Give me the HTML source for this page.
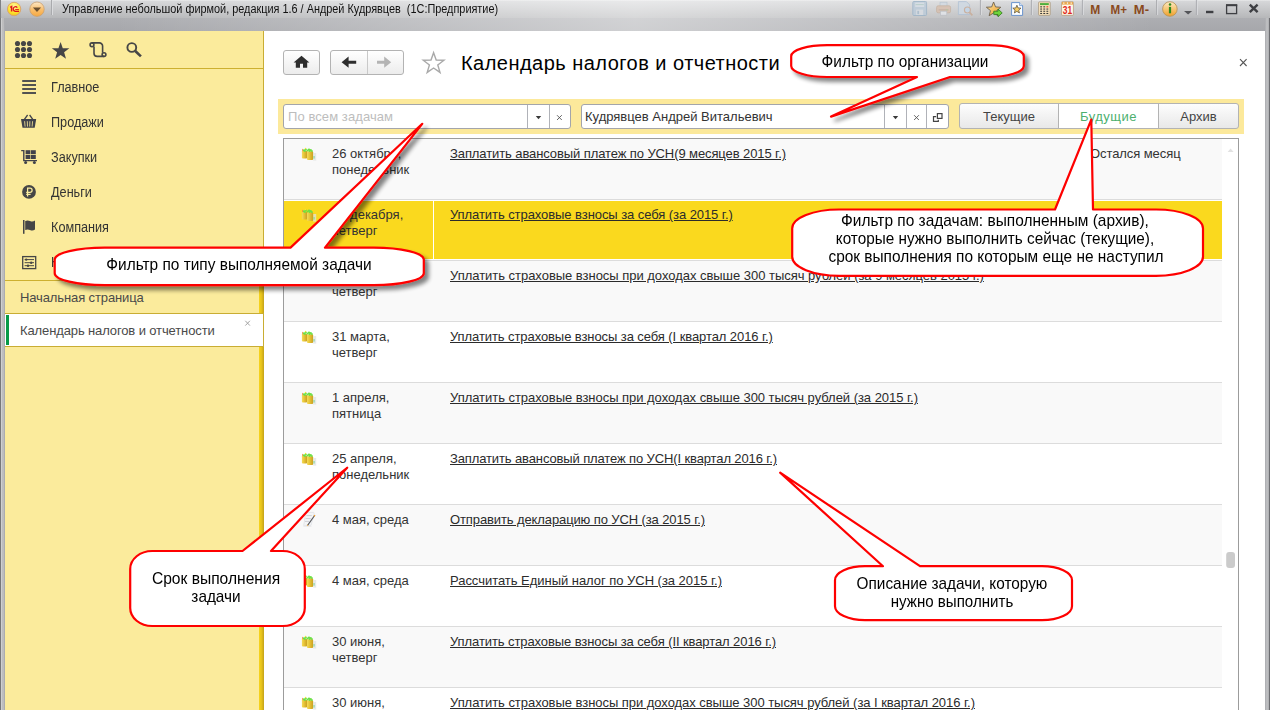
<!DOCTYPE html>
<html lang="ru">
<head>
<meta charset="utf-8">
<title>Календарь налогов и отчетности</title>
<style>
*{box-sizing:border-box;margin:0;padding:0}
html,body{width:1270px;height:710px;overflow:hidden;background:#fff}
body{position:relative;font-family:"Liberation Sans",sans-serif;color:#333;font-size:13px}
.abs{position:absolute}
.t{position:absolute;white-space:nowrap;line-height:1}
/* window chrome */
#tb1{left:0;top:0;width:1270px;height:18px;background:linear-gradient(#e9eaeb 0,#d5d6d8 1.5px,#b6b7b9 18px)}
#tb2{left:0;top:18px;width:1270px;height:13px;background:linear-gradient(#adaeb2,#a6a7ab)}
#tbo{left:0;top:0;width:1270px;height:31px;background:linear-gradient(90deg,rgba(255,255,255,0) 0,rgba(255,255,255,0) 9%,rgba(255,255,255,.46) 50%,rgba(255,255,255,0) 91%,rgba(255,255,255,0) 100%)}
#lb{left:0;top:18px;width:5px;height:692px;background:linear-gradient(90deg,#77787a 0,#77787a 1px,#cfcfd0 1px,#cfcfd0 2px,#bebebf 2px,#bcbcbe 4px,#abacb0 4px,#abacb0 5px)}
#lb0{left:0;top:0;width:1px;height:18px;background:#808185}
#rb{left:1265px;top:18px;width:5px;height:692px;background:linear-gradient(90deg,#a9aaae 0,#c2c3c5 2px,#acadb0 4px,#6c6d71 4px,#6c6d71 5px)}
.sep{position:absolute;top:1px;width:1px;height:16px;background:#b0b1b4;box-shadow:1px 0 0 #e6e7e9}
/* sidebar */
#side{left:5px;top:31px;width:259px;height:679px;background:#fbeb9c}
#sideedge{left:259px;top:281px;width:5px;height:429px;background:linear-gradient(90deg,#f7d41c,#e6c21c 50%,#c3a21a)}
.gl{position:absolute;left:5px;width:254px;height:1px;background:#cdb030}
.mi{position:absolute;left:50.5px;font-size:14px;line-height:16px;color:#333;white-space:nowrap;transform:scaleX(.905);transform-origin:0 50%}
.tab{position:absolute;left:20px;font-size:13px;line-height:16px;color:#4a4a4a;white-space:nowrap;letter-spacing:-.12px}
/* content */
.btn{position:absolute;top:50px;height:25px;border:1px solid #b3b3b3;border-radius:3px;background:linear-gradient(#ffffff,#ececec)}
#fbar{left:278px;top:99px;width:966px;height:35px;background:#fce99b}
.inp{position:absolute;top:104px;height:25px;border:1px solid #a3a5ab;border-radius:3px;background:#fff}
.vd{position:absolute;top:0;width:1px;height:23px;background:#b0b2b8}
.seg{position:absolute;top:103px;height:26px;border:1px solid #b3b3b3;background:linear-gradient(#fdfdfd,#e8e8e8);font-size:13px;line-height:25px;text-align:center;color:#444}
/* table */
#tbl{left:283px;top:138px;width:956px;height:580px;border:1px solid #9c9c9c;background:#fff}
.row{position:absolute;left:284px;width:938px;height:60px}
.odd{background:#f9f9f9}
.rl{position:absolute;left:284px;width:938px;height:1px;background:#dcdcdc}
.d{position:absolute;left:332px;font-size:13px;line-height:16px;color:#333;white-space:nowrap}
.k{position:absolute;left:450px;font-size:13px;line-height:16px;color:#2b2b2b;white-space:nowrap;text-decoration:underline;letter-spacing:-.07px}
/* callouts */
.ct{position:absolute;font-size:17px;line-height:18px;color:#000;text-align:center;white-space:nowrap;transform:scaleX(.906);transform-origin:50% 50%}
</style>
</head>
<body>
<!-- ===== window chrome ===== -->
<div class="abs" id="tb1"></div>
<div class="abs" id="tb2"></div>
<div class="abs" id="tbo"></div>
<div class="abs" id="lb"></div><div class="abs" id="lb0"></div>
<div class="abs" id="rb"></div>
<div class="t" id="wtitle" style="left:62px;top:2px;font-size:12px;line-height:14px;color:#111;transform:scaleX(.907);transform-origin:0 50%">Управление небольшой фирмой, редакция 1.6 / Андрей Кудрявцев&nbsp; (1С:Предприятие)</div>

<!--TB-->
<svg class="abs" style="left:0;top:0" width="1270" height="32" viewBox="0 0 1270 32">
<defs>
<radialGradient id="g1c" cx=".5" cy=".3" r=".8"><stop offset="0" stop-color="#fff7a0"/><stop offset=".6" stop-color="#fde22a"/><stop offset="1" stop-color="#e9b820"/></radialGradient>
<linearGradient id="gor" x1="0" y1="0" x2="0" y2="1"><stop offset="0" stop-color="#fde8c8"/><stop offset=".5" stop-color="#f9c070"/><stop offset="1" stop-color="#f6a840"/></linearGradient>
<linearGradient id="gst" x1="0" y1="0" x2="1" y2="1"><stop offset="0" stop-color="#fde6a8"/><stop offset="1" stop-color="#ee9c22"/></linearGradient>
<linearGradient id="gin" x1="0" y1="0" x2="0" y2="1"><stop offset="0" stop-color="#fdebc4"/><stop offset="1" stop-color="#f0a028"/></linearGradient>
</defs>
<circle cx="14.1" cy="9" r="6.7" fill="url(#g1c)" stroke="#d9a070" stroke-width=".9"/>
<path d="M10.2,7.4 l1.4,-.9 v5" fill="none" stroke="#e0151b" stroke-width="1.5"/><path d="M17.3,7.6 a2.3,2.3 0 1 0 -1.4,3.7 h3.1" fill="none" stroke="#e0151b" stroke-width="1.3"/><path d="M15.2,9.6 h3.7" stroke="#e0151b" stroke-width="1"/>
<circle cx="37" cy="9.2" r="7.2" fill="url(#gor)" stroke="#c9a070" stroke-width=".8"/><path d="M32.9,7.4 h8.2 l-4.1,4.6 Z" fill="#6b5030"/>
<rect x="51.0" y="0" width="1" height="15" fill="#a9aaad"/><rect x="52.0" y="0" width="1" height="15" fill="#dfe0e2" opacity=".8"/>
<rect x="979.9" y="0" width="1" height="15" fill="#a9aaad"/><rect x="980.9" y="0" width="1" height="15" fill="#dfe0e2" opacity=".8"/>
<rect x="1030.9" y="0" width="1" height="15" fill="#a9aaad"/><rect x="1031.9" y="0" width="1" height="15" fill="#dfe0e2" opacity=".8"/>
<rect x="1081.9" y="0" width="1" height="15" fill="#a9aaad"/><rect x="1082.9" y="0" width="1" height="15" fill="#dfe0e2" opacity=".8"/>
<rect x="1156.1" y="0" width="1" height="15" fill="#a9aaad"/><rect x="1157.1" y="0" width="1" height="15" fill="#dfe0e2" opacity=".8"/>
<rect x="1195.9" y="0" width="1" height="15" fill="#a9aaad"/><rect x="1196.9" y="0" width="1" height="15" fill="#dfe0e2" opacity=".8"/>
<g opacity=".85">
<rect x="912.8" y="1.5" width="13.8" height="14" rx="1" fill="#bccbd9" stroke="#9db4c8" stroke-width="1"/><rect x="915.2" y="2.6" width="9" height="4.4" fill="#d6dee6"/><path d="M915.6,4.6 h8.2" stroke="#a9c6c0" stroke-width=".8"/><rect x="916.2" y="9.6" width="7" height="5.4" fill="#d8dde3"/><rect x="917.3" y="10.8" width="1.8" height="3.4" fill="#a9bccd"/>
<rect x="940" y="2.2" width="7" height="5" fill="#d3dbe3" stroke="#b3c0cc" stroke-width=".7"/><rect x="936.6" y="5.8" width="14" height="7" rx="1.6" fill="#d8c1b0" stroke="#c4ad9c" stroke-width=".8"/><rect x="938.6" y="9.4" width="10" height="1" fill="#bfa898"/><rect x="940.4" y="11.2" width="6.4" height="4" fill="#e3e6ea" stroke="#b9bcc2" stroke-width=".7"/><rect x="946.4" y="9.4" width="1.2" height="1" fill="#9fd49a"/>
<path d="M958.4,1.6 h8 l3.2,3.2 v9.8 h-11.2 Z" fill="#cfd9e3" stroke="#a9bdd2" stroke-width=".8"/><circle cx="967.4" cy="10" r="3" fill="#c4d7ea" stroke="#c9ac98" stroke-width="1.1"/><path d="M969.6,12.4 l2.8,3" stroke="#c9ac98" stroke-width="1.6"/>
</g>
<polygon points="993.60,2.00 995.54,6.93 1000.83,7.25 996.74,10.62 998.07,15.75 993.60,12.90 989.13,15.75 990.46,10.62 986.37,7.25 991.66,6.93" fill="url(#gst)" stroke="#6e6350" stroke-width=".9"/>
<path d="M993.8,11.2 h4.2 v-2.2 l4.2,3.9 l-4.2,3.9 v-2.2 h-4.2 Z" fill="#6fd43a" stroke="#2f7a1c" stroke-width=".8"/>
<path d="M1011.6,2.6 h8 l3,3 v9.8 h-11 Z" fill="#fdfeff" stroke="#5b8acb" stroke-width=".9"/><path d="M1019.6,2.6 v3 h3" fill="#dbe7f5" stroke="#5b8acb" stroke-width=".7"/>
<polygon points="1016.90,5.20 1018.02,7.96 1020.99,8.17 1018.71,10.09 1019.43,12.98 1016.90,11.40 1014.37,12.98 1015.09,10.09 1012.81,8.17 1015.78,7.96" fill="#f6cd62" stroke="#5e5544" stroke-width=".8"/>
<rect x="1038.6" y="1.9" width="11.6" height="13.4" rx=".8" fill="#fbe5bd" stroke="#a7977f" stroke-width=".8"/><rect x="1040" y="3.1" width="8.8" height="2" fill="#4caf3c"/>
<rect x="1040.2" y="6.3" width="1.9" height="1.1" fill="#3a3a3a"/>
<rect x="1043.3" y="6.3" width="1.9" height="1.1" fill="#3a3a3a"/>
<rect x="1046.4" y="6.3" width="1.9" height="1.1" fill="#e03020"/>
<rect x="1040.2" y="8.5" width="1.9" height="1.1" fill="#3a3a3a"/>
<rect x="1043.3" y="8.5" width="1.9" height="1.1" fill="#3a3a3a"/>
<rect x="1046.4" y="8.5" width="1.9" height="1.1" fill="#3a3a3a"/>
<rect x="1040.2" y="10.7" width="1.9" height="1.1" fill="#3a3a3a"/>
<rect x="1043.3" y="10.7" width="1.9" height="1.1" fill="#3a3a3a"/>
<rect x="1046.4" y="10.7" width="1.9" height="1.1" fill="#3a3a3a"/>
<rect x="1040.2" y="12.9" width="1.9" height="1.1" fill="#3a3a3a"/>
<rect x="1043.3" y="12.9" width="1.9" height="1.1" fill="#3a3a3a"/>
<rect x="1046.4" y="12.9" width="1.9" height="1.1" fill="#3a3a3a"/>
<rect x="1061.6" y="1.7" width="11.8" height="13.6" rx=".8" fill="#fff8ea" stroke="#b59a78" stroke-width=".8"/><rect x="1062" y="2" width="11" height="2.6" fill="#e9a84e"/>
<rect x="1063.2" y="2.5" width="1.2" height="1.2" fill="#fff"/>
<rect x="1066.9" y="2.5" width="1.2" height="1.2" fill="#fff"/>
<rect x="1070.6000000000001" y="2.5" width="1.2" height="1.2" fill="#fff"/>
<text x="1067.5" y="13.6" font-family="Liberation Sans" font-weight="bold" font-size="10" fill="#e02a1a" text-anchor="middle" textLength="9.4" lengthAdjust="spacingAndGlyphs">31</text>
<g font-family="Liberation Sans" font-weight="bold" font-size="13.4" fill="#8a4a1c"><text x="1090.3" y="14" textLength="10" lengthAdjust="spacingAndGlyphs">M</text><text x="1110.6" y="14" textLength="16.4" lengthAdjust="spacingAndGlyphs">M+</text><text x="1133.8" y="14" textLength="15.2" lengthAdjust="spacingAndGlyphs">M-</text></g>
<circle cx="1169.9" cy="9" r="7.3" fill="url(#gin)" stroke="#b8965c" stroke-width=".9"/><rect x="1168.9" y="6.9" width="2.2" height="6.4" fill="#2e8a1e"/><circle cx="1170" cy="4.6" r="1.25" fill="#2e8a1e"/>
<path d="M1184,11 h8.2 l-4.1,3.6 Z" fill="#55565a"/>
<rect x="1206" y="10.8" width="7.4" height="2.4" fill="#3e3f43"/>
<rect x="1226.6" y="5.2" width="10" height="8.4" fill="none" stroke="#3e3f43" stroke-width="1.3"/><rect x="1226" y="4.2" width="11.2" height="2" fill="#3e3f43"/>
<path d="M1249.8,4.6 l7.8,7.6 M1257.6,4.6 l-7.8,7.6" stroke="#3e3f43" stroke-width="2.4"/>
</svg>
<!--/TB-->
<!-- ===== sidebar ===== -->
<div class="abs" id="side"></div>
<div class="abs" id="sideedge"></div>
<div class="abs" style="left:263px;top:31px;width:1px;height:250px;background:#c9ad33"></div>
<div class="gl" style="top:68px;width:258px"></div>
<div class="mi" style="top:79px">Главное</div>
<div class="mi" style="top:114px">Продажи</div>
<div class="mi" style="top:149px">Закупки</div>
<div class="mi" style="top:184px">Деньги</div>
<div class="mi" style="top:219px">Компания</div>
<div class="mi" style="top:254px">Настройки</div>
<div class="gl" style="top:280px"></div>
<div class="tab" style="top:290px">Начальная страница</div>
<div class="abs" style="left:5px;top:313px;width:259px;height:34px;background:#fff;border:1px solid #c9ad33;border-left:none"></div>
<div class="abs" style="left:6px;top:315px;width:3px;height:30px;background:#079a47"></div>
<div class="tab" style="top:323px">Календарь налогов и отчетности</div>

<!-- ===== content header ===== -->
<div class="btn" style="left:283px;width:37px"></div>
<div class="btn" style="left:330px;width:74px"></div>
<div class="abs" style="left:367px;top:51px;width:1px;height:23px;background:#c9c9c9"></div>
<div class="t" id="ptitle" style="left:461px;top:52px;font-size:20px;line-height:22px;color:#000;letter-spacing:.47px">Календарь налогов и отчетности</div>

<!-- ===== filter bar ===== -->
<div class="abs" id="fbar"></div>
<div class="inp" style="left:283px;width:288px"><div class="vd" style="left:243px"></div><div class="vd" style="left:265px"></div></div>
<div class="t" style="left:288px;top:109px;font-size:13px;line-height:15px;color:#bdbdbd;letter-spacing:.08px">По всем задачам</div>
<div class="inp" style="left:581px;width:368px"><div class="vd" style="left:302px"></div><div class="vd" style="left:324px"></div><div class="vd" style="left:344px"></div></div>
<div class="t" id="org" style="left:585px;top:109px;font-size:13px;line-height:16px;color:#333">Кудрявцев Андрей Витальевич</div>
<div class="seg" style="left:959px;width:100px;border-radius:3px 0 0 3px">Текущие</div>
<div class="seg" style="left:1058px;width:101px;background:#fff;color:#4caf6e;letter-spacing:.5px">Будущие</div>
<div class="seg" style="left:1158px;width:81px;border-radius:0 3px 3px 0">Архив</div>

<!-- ===== table ===== -->
<div class="abs" id="tbl"></div>




<!--ICONS-->
<svg class="abs" style="left:0;top:0" width="1270" height="710" viewBox="0 0 1270 710">
<defs>
<linearGradient id="gold" x1="0" x2="1"><stop offset="0" stop-color="#f4dc58"/><stop offset=".45" stop-color="#e6c236"/><stop offset="1" stop-color="#c9a022"/></linearGradient>
<g id="coin"><rect x="13.2" y="6" width="3" height="7.6" fill="#dfe3e3" opacity=".75"/><rect x="13.3" y="9" width="1.5" height="2.6" fill="#7fd79a" opacity=".7"/>
<rect x="1.9" y="3.7" width="5.2" height="7.8" rx=".9" fill="url(#gold)"/><rect x="7" y="4.3" width="6.1" height="8.6" rx=".9" fill="url(#gold)"/>
<g fill="#6be045"><circle cx="4" cy="3.3" r="1.15"/><circle cx="5.8" cy="2.6" r="1.1"/><circle cx="7.6" cy="3.4" r="1"/><circle cx="9" cy="2.7" r="1.15"/><circle cx="10.8" cy="3.1" r="1.1"/><circle cx="11.9" cy="4" r=".9"/><circle cx="9.6" cy="4.1" r="1"/><circle cx="5" cy="4.1" r=".9"/></g>
<circle cx="5.5" cy="1.5" r=".7" fill="#f4e430"/><rect x="2.2" y="1.9" width=".8" height="2.2" fill="#f08a3c"/></g>
<g id="doc"><path d="M5.6,-.6 h8.2 l.4,1.6 l-3.2,11.4 h-7.4 l.6,-2.4 Z" fill="#f4f5f7" stroke="#dcdfe4" stroke-width=".7"/><path d="M6.4,2.6 h5.4 M5.6,5.6 h5.2 M5,8.4 h4" stroke="#cfd1d6" stroke-width="1"/><path d="M14.8,2.2 L7.4,12.6" stroke="#55565a" stroke-width="1.1"/><path d="M14.9,2 l-.9,1.3 M7.9,11.9 l-.7,1" stroke="#f0a030" stroke-width="1.3"/><path d="M3.4,13.2 h8" stroke="#e6e6e8" stroke-width="1"/></g>
</defs>
<circle cx="17.5" cy="43.5" r="2.55" fill="#464646"/>
<circle cx="23.5" cy="43.5" r="2.55" fill="#464646"/>
<circle cx="29.5" cy="43.5" r="2.55" fill="#464646"/>
<circle cx="17.5" cy="49.5" r="2.55" fill="#464646"/>
<circle cx="23.5" cy="49.5" r="2.55" fill="#464646"/>
<circle cx="29.5" cy="49.5" r="2.55" fill="#464646"/>
<circle cx="17.5" cy="55.5" r="2.55" fill="#464646"/>
<circle cx="23.5" cy="55.5" r="2.55" fill="#464646"/>
<circle cx="29.5" cy="55.5" r="2.55" fill="#464646"/>
<polygon points="60.60,42.00 62.77,48.21 69.35,48.36 64.12,52.34 66.01,58.64 60.60,54.90 55.19,58.64 57.08,52.34 51.85,48.36 58.43,48.21" fill="#464646"/>
<g fill="none" stroke="#464646" stroke-width="1.6"><path d="M91.8,42.9 h7.6 a3.2,3.2 0 0 1 3.2,3.2 v6.6"/><path d="M104.2,56.4 h-7 a3.2,3.2 0 0 1 -3.2,-3.2 v-6.6"/><circle cx="92" cy="44.8" r="1.9"/><circle cx="104" cy="54.6" r="1.9"/></g>
<circle cx="131.8" cy="47.5" r="4.4" fill="none" stroke="#464646" stroke-width="1.9"/><path d="M135.3,51 L140.9,56.4" stroke="#464646" stroke-width="2.6"/>
<rect x="22.2" y="80.1" width="13.8" height="1.8" fill="#40424a"/>
<rect x="22.2" y="84.1" width="13.8" height="1.8" fill="#40424a"/>
<rect x="22.2" y="88.1" width="13.8" height="1.8" fill="#40424a"/>
<rect x="22.2" y="92.1" width="13.8" height="1.8" fill="#40424a"/>
<path d="M21,119 h15.2 l-1.5,8.8 h-12.2 Z" fill="#40424a"/><path d="M24.4,119.3 L27.6,115 M32.8,119.3 L29.6,115" stroke="#40424a" stroke-width="1.3" fill="none"/>
<path d="M24.6,121.2 l.5,5.4 M27.3,121.2 l.2,5.4 M29.9,121.2 l-.2,5.4 M32.6,121.2 l-.5,5.4" stroke="#d9cc8a" stroke-width="1" fill="none"/>
<path d="M21.2,150.6 h2.6 v10 h13.2" fill="none" stroke="#40424a" stroke-width="1.4"/><circle cx="25.6" cy="162.6" r="1.5" fill="#40424a"/><circle cx="34.4" cy="162.6" r="1.5" fill="#40424a"/>
<rect x="25.6" y="150.2" width="4.8" height="4" fill="#40424a"/>
<rect x="31" y="150.2" width="4.8" height="4" fill="#40424a"/>
<rect x="25.6" y="155" width="4.8" height="4" fill="#40424a"/>
<rect x="31" y="155" width="4.8" height="4" fill="#40424a"/>
<circle cx="29" cy="191.9" r="6.9" fill="#464646"/><path d="M27.6,196.4 v-8.2 h2.4 a2.1,2.1 0 0 1 0,4.2 h-3.8 M26.2,194.4 h4.4" fill="none" stroke="#fbed9e" stroke-width="1.25"/>
<rect x="23" y="220" width="1.5" height="13.8" fill="#464646"/><path d="M25.2,221 q2.4,-1.2 4.8,0 q2.6,1.2 5,-.4 v9 q-2.4,1.6 -5,.4 q-2.4,-1.2 -4.8,0 Z" fill="#464646"/>
<rect x="22.7" y="256.6" width="13" height="12" fill="none" stroke="#464646" stroke-width="1.3"/><path d="M24.6,259.6 h9.4 M24.6,262.7 h9.4 M24.6,265.7 h9.4" stroke="#464646" stroke-width="1"/><circle cx="26.2" cy="259.6" r="1.2" fill="#464646"/><circle cx="31.2" cy="262.7" r="1.2" fill="#464646"/><circle cx="28" cy="265.7" r="1.2" fill="#464646"/>
<path d="M245.3,320.8 l4.6,4.8 M249.9,320.8 l-4.6,4.8" stroke="#9a9a9a" stroke-width=".9"/>
<path d="M293.6,62.4 L301.5,55.8 L309.4,62.4 L307.2,62.4 L307.2,67.8 L303,67.8 L303,63.8 L300,63.8 L300,67.8 L295.8,67.8 L295.8,62.4 Z" fill="#2e2e2e"/>
<path d="M341.6,62.2 L348.6,56.6 L348.6,60.7 L356.2,60.7 L356.2,63.7 L348.6,63.7 L348.6,67.8 Z" fill="#2e2e2e"/>
<path d="M391.2,62.2 L384.2,56.6 L384.2,60.7 L377,60.7 L377,63.7 L384.2,63.7 L384.2,67.8 Z" fill="#b4b4b4"/>
<polygon points="433.60,52.70 436.19,60.04 443.97,60.23 437.78,64.96 440.01,72.42 433.60,68.00 427.19,72.42 429.42,64.96 423.23,60.23 431.01,60.04" fill="#fff" stroke="#a9a9a9" stroke-width="1.4" stroke-linejoin="miter"/>
<path d="M1240,59.2 l6.6,6.8 M1246.6,59.2 l-6.6,6.8" stroke="#555" stroke-width="1.1"/>
<path d="M535.8,116 h5.4 l-2.7,3.2 Z" fill="#3a3a3a"/>
<path d="M557,115.2 l4.8,4.8 M561.8,115.2 l-4.8,4.8" stroke="#555" stroke-width=".9"/>
<path d="M892.8,116 h5.4 l-2.7,3.2 Z" fill="#3a3a3a"/>
<path d="M914.1,115.2 l4.8,4.8 M918.9,115.2 l-4.8,4.8" stroke="#555" stroke-width=".9"/>
<rect x="937.4" y="113.6" width="4.6" height="4.8" fill="none" stroke="#444" stroke-width="1.2"/><path d="M936.2,116.6 h-2.7 v4.8 h4.8 v-1.6" fill="none" stroke="#444" stroke-width="1.2"/>
<path d="M1227.6,152 l3,-3.4 l3,3.4 Z" fill="#e2e2e2"/>
<rect x="1226.2" y="552" width="8.8" height="16" rx="3" fill="#cbcbcb"/>
</svg>
<!--/ICONS-->
<!--ROWS-->
<div class="row odd" style="top:139px;"></div>
<div class="rl" style="top:199px"></div>
<svg class="abs" style="left:300px;top:147px;overflow:visible" width="18" height="15"><rect x="13.2" y="6" width="3" height="7.6" fill="#dfe3e3" opacity=".75"/><rect x="13.3" y="9" width="1.5" height="2.6" fill="#7fd79a" opacity=".7"/>
<rect x="1.9" y="3.7" width="5.2" height="7.8" rx=".9" fill="url(#gold)"/><rect x="7" y="4.3" width="6.1" height="8.6" rx=".9" fill="url(#gold)"/>
<g fill="#6be045"><circle cx="4" cy="3.3" r="1.15"/><circle cx="5.8" cy="2.6" r="1.1"/><circle cx="7.6" cy="3.4" r="1"/><circle cx="9" cy="2.7" r="1.15"/><circle cx="10.8" cy="3.1" r="1.1"/><circle cx="11.9" cy="4" r=".9"/><circle cx="9.6" cy="4.1" r="1"/><circle cx="5" cy="4.1" r=".9"/></g>
<circle cx="5.5" cy="1.5" r=".7" fill="#f4e430"/><rect x="2.2" y="1.9" width=".8" height="2.2" fill="#f08a3c"/></svg>
<div class="d" style="top:146px">26 октября,<br>понедельник</div>
<div class="k" id="k0" style="top:146px;letter-spacing:-0.095px">Заплатить авансовый платеж по УСН(9 месяцев 2015 г.)</div>
<div class="row" style="top:200px;"></div>
<div class="abs" style="left:284px;top:201px;width:938px;height:58px;background:#fad91e"></div>
<div class="abs" style="left:433px;top:200px;width:1px;height:60px;background:#fff"></div>
<div class="rl" style="top:260px"></div>
<svg class="abs" style="left:300px;top:208px;overflow:visible" width="18" height="15"><rect x="13.2" y="6" width="3" height="7.6" fill="#dfe3e3" opacity=".75"/><rect x="13.3" y="9" width="1.5" height="2.6" fill="#7fd79a" opacity=".7"/>
<rect x="1.9" y="3.7" width="5.2" height="7.8" rx=".9" fill="url(#gold)"/><rect x="7" y="4.3" width="6.1" height="8.6" rx=".9" fill="url(#gold)"/>
<g fill="#6be045"><circle cx="4" cy="3.3" r="1.15"/><circle cx="5.8" cy="2.6" r="1.1"/><circle cx="7.6" cy="3.4" r="1"/><circle cx="9" cy="2.7" r="1.15"/><circle cx="10.8" cy="3.1" r="1.1"/><circle cx="11.9" cy="4" r=".9"/><circle cx="9.6" cy="4.1" r="1"/><circle cx="5" cy="4.1" r=".9"/></g>
<circle cx="5.5" cy="1.5" r=".7" fill="#f4e430"/><rect x="2.2" y="1.9" width=".8" height="2.2" fill="#f08a3c"/></svg>
<div class="d" style="top:207px">31 декабря,<br>четверг</div>
<div class="k" id="k1" style="top:207px;letter-spacing:-0.07px">Уплатить страховые взносы за себя (за 2015 г.)</div>
<div class="row odd" style="top:261px;"></div>
<div class="rl" style="top:321px"></div>
<svg class="abs" style="left:300px;top:269px;overflow:visible" width="18" height="15"><rect x="13.2" y="6" width="3" height="7.6" fill="#dfe3e3" opacity=".75"/><rect x="13.3" y="9" width="1.5" height="2.6" fill="#7fd79a" opacity=".7"/>
<rect x="1.9" y="3.7" width="5.2" height="7.8" rx=".9" fill="url(#gold)"/><rect x="7" y="4.3" width="6.1" height="8.6" rx=".9" fill="url(#gold)"/>
<g fill="#6be045"><circle cx="4" cy="3.3" r="1.15"/><circle cx="5.8" cy="2.6" r="1.1"/><circle cx="7.6" cy="3.4" r="1"/><circle cx="9" cy="2.7" r="1.15"/><circle cx="10.8" cy="3.1" r="1.1"/><circle cx="11.9" cy="4" r=".9"/><circle cx="9.6" cy="4.1" r="1"/><circle cx="5" cy="4.1" r=".9"/></g>
<circle cx="5.5" cy="1.5" r=".7" fill="#f4e430"/><rect x="2.2" y="1.9" width=".8" height="2.2" fill="#f08a3c"/></svg>
<div class="d" style="top:268px">31 декабря,<br>четверг</div>
<div class="k" id="k2" style="top:268px;letter-spacing:-0.028px">Уплатить страховые взносы при доходах свыше 300 тысяч рублей (за 9 месяцев 2015 г.)</div>
<div class="row" style="top:322px;"></div>
<div class="rl" style="top:382px"></div>
<svg class="abs" style="left:300px;top:330px;overflow:visible" width="18" height="15"><rect x="13.2" y="6" width="3" height="7.6" fill="#dfe3e3" opacity=".75"/><rect x="13.3" y="9" width="1.5" height="2.6" fill="#7fd79a" opacity=".7"/>
<rect x="1.9" y="3.7" width="5.2" height="7.8" rx=".9" fill="url(#gold)"/><rect x="7" y="4.3" width="6.1" height="8.6" rx=".9" fill="url(#gold)"/>
<g fill="#6be045"><circle cx="4" cy="3.3" r="1.15"/><circle cx="5.8" cy="2.6" r="1.1"/><circle cx="7.6" cy="3.4" r="1"/><circle cx="9" cy="2.7" r="1.15"/><circle cx="10.8" cy="3.1" r="1.1"/><circle cx="11.9" cy="4" r=".9"/><circle cx="9.6" cy="4.1" r="1"/><circle cx="5" cy="4.1" r=".9"/></g>
<circle cx="5.5" cy="1.5" r=".7" fill="#f4e430"/><rect x="2.2" y="1.9" width=".8" height="2.2" fill="#f08a3c"/></svg>
<div class="d" style="top:329px">31 марта,<br>четверг</div>
<div class="k" id="k3" style="top:329px;letter-spacing:-0.083px">Уплатить страховые взносы за себя (I квартал 2016 г.)</div>
<div class="row odd" style="top:383px;"></div>
<div class="rl" style="top:443px"></div>
<svg class="abs" style="left:300px;top:391px;overflow:visible" width="18" height="15"><rect x="13.2" y="6" width="3" height="7.6" fill="#dfe3e3" opacity=".75"/><rect x="13.3" y="9" width="1.5" height="2.6" fill="#7fd79a" opacity=".7"/>
<rect x="1.9" y="3.7" width="5.2" height="7.8" rx=".9" fill="url(#gold)"/><rect x="7" y="4.3" width="6.1" height="8.6" rx=".9" fill="url(#gold)"/>
<g fill="#6be045"><circle cx="4" cy="3.3" r="1.15"/><circle cx="5.8" cy="2.6" r="1.1"/><circle cx="7.6" cy="3.4" r="1"/><circle cx="9" cy="2.7" r="1.15"/><circle cx="10.8" cy="3.1" r="1.1"/><circle cx="11.9" cy="4" r=".9"/><circle cx="9.6" cy="4.1" r="1"/><circle cx="5" cy="4.1" r=".9"/></g>
<circle cx="5.5" cy="1.5" r=".7" fill="#f4e430"/><rect x="2.2" y="1.9" width=".8" height="2.2" fill="#f08a3c"/></svg>
<div class="d" style="top:390px">1 апреля,<br>пятница</div>
<div class="k" id="k4" style="top:390px;letter-spacing:-0.036px">Уплатить страховые взносы при доходах свыше 300 тысяч рублей (за 2015 г.)</div>
<div class="row" style="top:444px;"></div>
<div class="rl" style="top:504px"></div>
<svg class="abs" style="left:300px;top:452px;overflow:visible" width="18" height="15"><rect x="13.2" y="6" width="3" height="7.6" fill="#dfe3e3" opacity=".75"/><rect x="13.3" y="9" width="1.5" height="2.6" fill="#7fd79a" opacity=".7"/>
<rect x="1.9" y="3.7" width="5.2" height="7.8" rx=".9" fill="url(#gold)"/><rect x="7" y="4.3" width="6.1" height="8.6" rx=".9" fill="url(#gold)"/>
<g fill="#6be045"><circle cx="4" cy="3.3" r="1.15"/><circle cx="5.8" cy="2.6" r="1.1"/><circle cx="7.6" cy="3.4" r="1"/><circle cx="9" cy="2.7" r="1.15"/><circle cx="10.8" cy="3.1" r="1.1"/><circle cx="11.9" cy="4" r=".9"/><circle cx="9.6" cy="4.1" r="1"/><circle cx="5" cy="4.1" r=".9"/></g>
<circle cx="5.5" cy="1.5" r=".7" fill="#f4e430"/><rect x="2.2" y="1.9" width=".8" height="2.2" fill="#f08a3c"/></svg>
<div class="d" style="top:451px">25 апреля,<br>понедельник</div>
<div class="k" id="k5" style="top:451px;letter-spacing:-0.122px">Заплатить авансовый платеж по УСН(I квартал 2016 г.)</div>
<div class="row odd" style="top:505px;"></div>
<div class="rl" style="top:565px"></div>
<svg class="abs" style="left:300px;top:513px;overflow:visible" width="18" height="15"><path d="M5.6,-.6 h8.2 l.4,1.6 l-3.2,11.4 h-7.4 l.6,-2.4 Z" fill="#f4f5f7" stroke="#dcdfe4" stroke-width=".7"/><path d="M6.4,2.6 h5.4 M5.6,5.6 h5.2 M5,8.4 h4" stroke="#cfd1d6" stroke-width="1"/><path d="M14.8,2.2 L7.4,12.6" stroke="#55565a" stroke-width="1.1"/><path d="M14.9,2 l-.9,1.3 M7.9,11.9 l-.7,1" stroke="#f0a030" stroke-width="1.3"/><path d="M3.4,13.2 h8" stroke="#e6e6e8" stroke-width="1"/></svg>
<div class="d" style="top:512px">4 мая, среда</div>
<div class="k" id="k6" style="top:512px;letter-spacing:-0.11px">Отправить декларацию по УСН (за 2015 г.)</div>
<div class="row" style="top:566px;"></div>
<div class="rl" style="top:626px"></div>
<svg class="abs" style="left:300px;top:574px;overflow:visible" width="18" height="15"><rect x="13.2" y="6" width="3" height="7.6" fill="#dfe3e3" opacity=".75"/><rect x="13.3" y="9" width="1.5" height="2.6" fill="#7fd79a" opacity=".7"/>
<rect x="1.9" y="3.7" width="5.2" height="7.8" rx=".9" fill="url(#gold)"/><rect x="7" y="4.3" width="6.1" height="8.6" rx=".9" fill="url(#gold)"/>
<g fill="#6be045"><circle cx="4" cy="3.3" r="1.15"/><circle cx="5.8" cy="2.6" r="1.1"/><circle cx="7.6" cy="3.4" r="1"/><circle cx="9" cy="2.7" r="1.15"/><circle cx="10.8" cy="3.1" r="1.1"/><circle cx="11.9" cy="4" r=".9"/><circle cx="9.6" cy="4.1" r="1"/><circle cx="5" cy="4.1" r=".9"/></g>
<circle cx="5.5" cy="1.5" r=".7" fill="#f4e430"/><rect x="2.2" y="1.9" width=".8" height="2.2" fill="#f08a3c"/></svg>
<div class="d" style="top:573px">4 мая, среда</div>
<div class="k" id="k7" style="top:573px;letter-spacing:-0.033px">Рассчитать Единый налог по УСН (за 2015 г.)</div>
<div class="row odd" style="top:627px;"></div>
<div class="rl" style="top:687px"></div>
<svg class="abs" style="left:300px;top:635px;overflow:visible" width="18" height="15"><rect x="13.2" y="6" width="3" height="7.6" fill="#dfe3e3" opacity=".75"/><rect x="13.3" y="9" width="1.5" height="2.6" fill="#7fd79a" opacity=".7"/>
<rect x="1.9" y="3.7" width="5.2" height="7.8" rx=".9" fill="url(#gold)"/><rect x="7" y="4.3" width="6.1" height="8.6" rx=".9" fill="url(#gold)"/>
<g fill="#6be045"><circle cx="4" cy="3.3" r="1.15"/><circle cx="5.8" cy="2.6" r="1.1"/><circle cx="7.6" cy="3.4" r="1"/><circle cx="9" cy="2.7" r="1.15"/><circle cx="10.8" cy="3.1" r="1.1"/><circle cx="11.9" cy="4" r=".9"/><circle cx="9.6" cy="4.1" r="1"/><circle cx="5" cy="4.1" r=".9"/></g>
<circle cx="5.5" cy="1.5" r=".7" fill="#f4e430"/><rect x="2.2" y="1.9" width=".8" height="2.2" fill="#f08a3c"/></svg>
<div class="d" style="top:634px">30 июня,<br>четверг</div>
<div class="k" id="k8" style="top:634px;letter-spacing:-0.089px">Уплатить страховые взносы за себя (II квартал 2016 г.)</div>
<div class="row" style="top:688px;"></div>
<svg class="abs" style="left:300px;top:696px;overflow:visible" width="18" height="15"><rect x="13.2" y="6" width="3" height="7.6" fill="#dfe3e3" opacity=".75"/><rect x="13.3" y="9" width="1.5" height="2.6" fill="#7fd79a" opacity=".7"/>
<rect x="1.9" y="3.7" width="5.2" height="7.8" rx=".9" fill="url(#gold)"/><rect x="7" y="4.3" width="6.1" height="8.6" rx=".9" fill="url(#gold)"/>
<g fill="#6be045"><circle cx="4" cy="3.3" r="1.15"/><circle cx="5.8" cy="2.6" r="1.1"/><circle cx="7.6" cy="3.4" r="1"/><circle cx="9" cy="2.7" r="1.15"/><circle cx="10.8" cy="3.1" r="1.1"/><circle cx="11.9" cy="4" r=".9"/><circle cx="9.6" cy="4.1" r="1"/><circle cx="5" cy="4.1" r=".9"/></g>
<circle cx="5.5" cy="1.5" r=".7" fill="#f4e430"/><rect x="2.2" y="1.9" width=".8" height="2.2" fill="#f08a3c"/></svg>
<div class="d" style="top:695px">30 июня,<br>четверг</div>
<div class="k" id="k9" style="top:695px;letter-spacing:-0.045px">Уплатить страховые взносы при доходах свыше 300 тысяч рублей (за I квартал 2016 г.)</div>
<div class="t" id="rest" style="left:1090px;top:146px;font-size:13px;line-height:16px;color:#333;letter-spacing:-.08px">Остался месяц</div>
<!--/ROWS-->
<!--CALLOUTS-->
<svg class="abs" style="left:0;top:0;overflow:visible" width="1270" height="710" viewBox="0 0 1270 710">
<defs><filter id="sh" x="-10%" y="-10%" width="130%" height="140%"><feGaussianBlur in="SourceAlpha" stdDeviation="2"/><feOffset dx="4" dy="4"/><feComponentTransfer><feFuncA type="linear" slope="0.48"/></feComponentTransfer><feMerge><feMergeNode/><feMergeNode in="SourceGraphic"/></feMerge></filter></defs>
<path id="c1" d="M827.2,45.2 L987.8,45.2 A36,11 0 0 1 1023.8,56.2 L1023.8,66 A36,11 0 0 1 987.8,77 L950,77 L831.03,116.6 L917,77 L827.2,77 A36,11 0 0 1 791.2,66 L791.2,56.2 A36,11 0 0 1 827.2,45.2 Z" fill="#fff" stroke="#fe0000" stroke-width="2.2" stroke-linejoin="round" filter="url(#sh)"/>
<path id="c2" d="M104.7,247.6 L290.5,247.6 L422.25,123.81 L325,247.6 L373.8,247.6 A50,12 0 0 1 423.8,259.6 L423.8,273.2 A50,12 0 0 1 373.8,285.2 L104.7,285.2 A50,12 0 0 1 54.7,273.2 L54.7,259.6 A50,12 0 0 1 104.7,247.6 Z" fill="#fff" stroke="#fe0000" stroke-width="2.2" stroke-linejoin="round" filter="url(#sh)"/>
<path id="c3" d="M839.2,209.5 L1055,209.5 L1091.29,119.58 L1093,209.5 L1156,209.5 A47,19 0 0 1 1203,228.5 L1203,256.8 A47,19 0 0 1 1156,275.8 L839.2,275.8 A47,19 0 0 1 792.2,256.8 L792.2,228.5 A47,19 0 0 1 839.2,209.5 Z" fill="#fff" stroke="#fe0000" stroke-width="2.2" stroke-linejoin="round"/>
<path id="c4" d="M152.2,551 L242.5,551 L347.19,467.75 L271,551 L282.8,551 A22,18 0 0 1 304.8,569 L304.8,608 A22,18 0 0 1 282.8,626 L152.2,626 A22,18 0 0 1 130.2,608 L130.2,569 A22,18 0 0 1 152.2,551 Z" fill="#fff" stroke="#fe0000" stroke-width="2.2" stroke-linejoin="round"/>
<path id="c5" d="M865,566.2 L883,566.2 L780.17,472.67 L920,566.2 L1042,566.2 A30,14 0 0 1 1072,580.2 L1072,606.2 A30,14 0 0 1 1042,620.2 L865,620.2 A30,14 0 0 1 835,606.2 L835,580.2 A30,14 0 0 1 865,566.2 Z" fill="#fff" stroke="#fe0000" stroke-width="2.2" stroke-linejoin="round"/>
</svg>
<div class="ct" style="left:655.40px;width:500px;top:53.1px;transform:scaleX(0.905)">Фильтр по организации</div>
<div class="ct" style="left:-11.35px;width:500px;top:256.3px;transform:scaleX(0.9073)">Фильтр по типу выполняемой задачи</div>
<div class="ct" style="left:745.40px;width:500px;top:211.8px;transform:scaleX(0.9096)">Фильтр по задачам: выполненным (архив),</div>
<div class="ct" style="left:745.30px;width:500px;top:229.8px;transform:scaleX(0.9007)">которые нужно выполнить сейчас (текущие),</div>
<div class="ct" style="left:746.20px;width:500px;top:247.8px;transform:scaleX(0.9074)">срок выполнения по которым еще не наступил</div>
<div class="ct" style="left:-34.20px;width:500px;top:569.7px;transform:scaleX(0.9177)">Срок выполнения</div>
<div class="ct" style="left:-33.65px;width:500px;top:587.7px;transform:scaleX(0.903)">задачи</div>
<div class="ct" style="left:702.30px;width:500px;top:575.3px;transform:scaleX(0.903)">Описание задачи, которую</div>
<div class="ct" style="left:701.65px;width:500px;top:593.3px;transform:scaleX(0.8877)">нужно выполнить</div>
<!--/CALLOUTS-->
</body>
</html>
